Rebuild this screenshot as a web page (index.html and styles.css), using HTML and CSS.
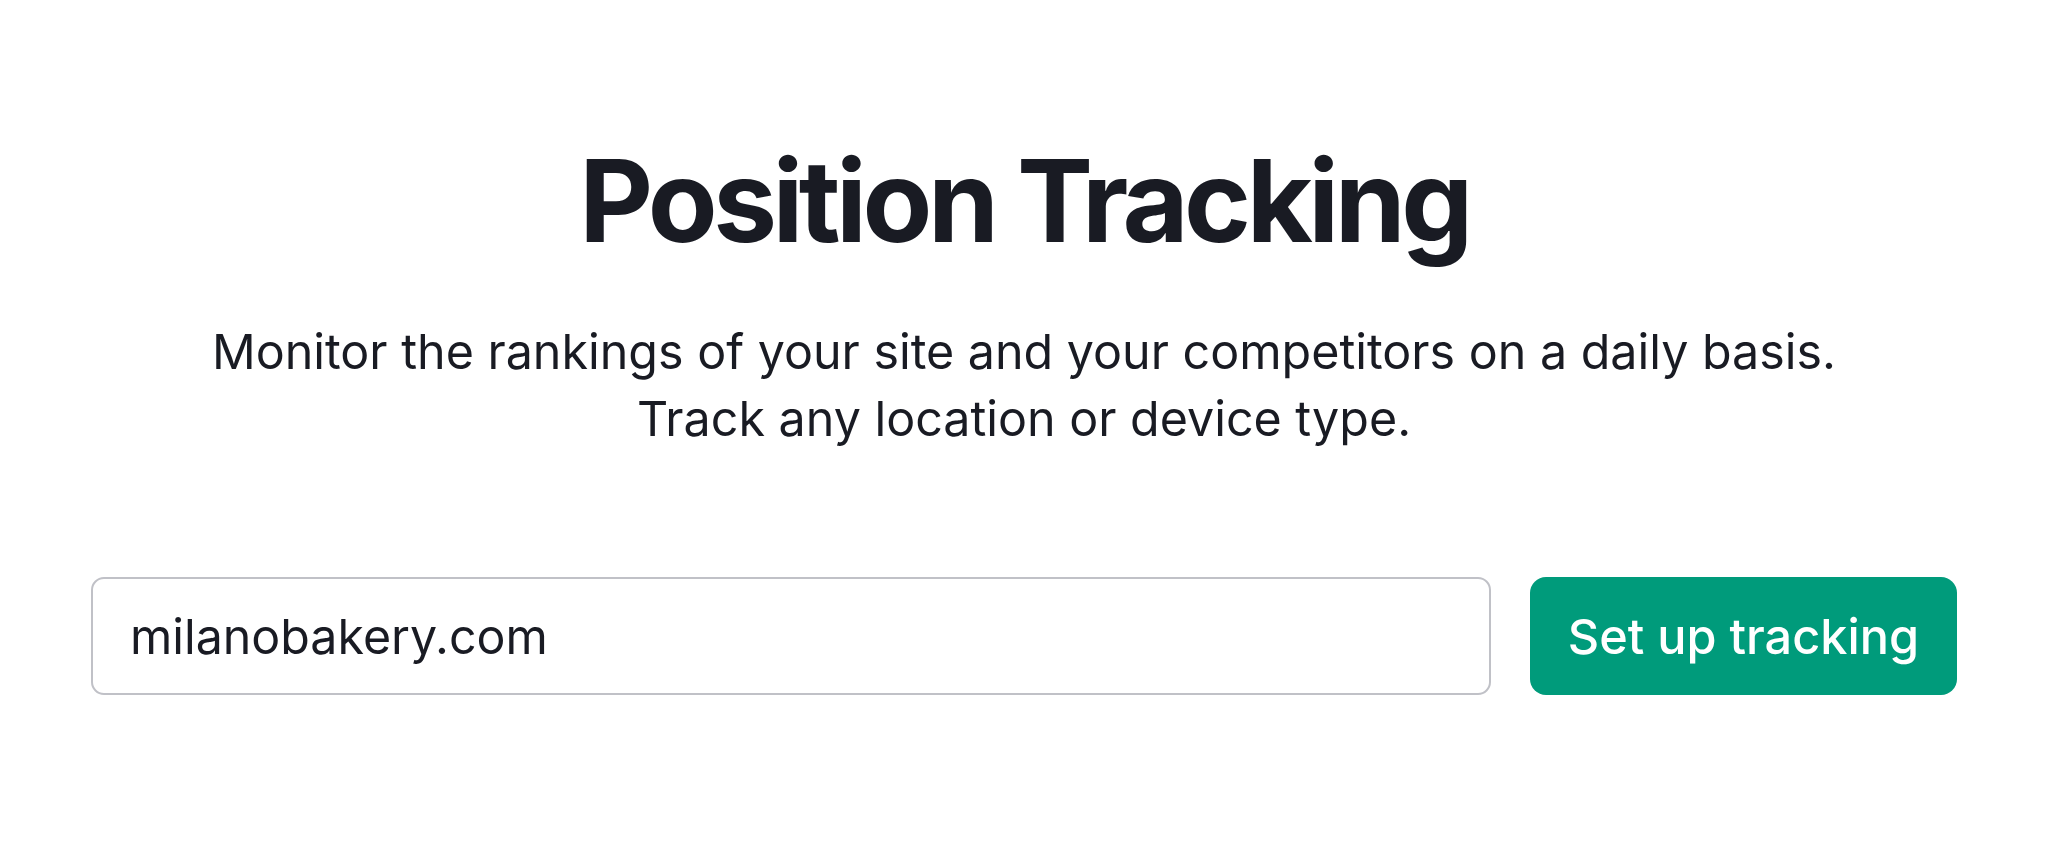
FILE: index.html
```html
<!DOCTYPE html>
<html lang="en">
<head>
    <meta charset="UTF-8">
    <meta name="viewport" content="width=device-width, initial-scale=1.0">
    <title>Position Tracking</title>
    <link rel="stylesheet" href="styles.css">
</head>
<body>

    <div class="container">
        <h1>Position Tracking</h1>
        <p class="lead">Monitor the rankings of your site and your competitors on a daily basis.<br>Track any location or device type.</p>

        <form class="tracking-form">
            <input type="text" class="domain-input" value="milanobakery.com">
            <button type="button" class="setup-btn">Set up tracking</button>
        </form>
    </div>

</body>
</html>
```

FILE: styles.css
```css
* {
    margin: 0;
    padding: 0;
    box-sizing: border-box;
}

body {
    font-family: Inter, "Noto Sans", sans-serif;
    background-color: #ffffff;
    color: #191b23;
}

.container {
    display: flex;
    flex-direction: column;
    align-items: center;
    padding-top: 131px;
}

h1 {
    font-size: 114px;
    font-weight: 700;
    line-height: 139px;
    letter-spacing: -4.5px;
}

.lead {
    margin-top: 48px;
    font-size: 48.4px;
    line-height: 67px;
    text-align: center;
}

.tracking-form {
    display: flex;
    gap: 39px;
    margin-top: 125px;
    width: 1866px;
}

.domain-input {
    flex: 1;
    height: 118px;
    padding: 0 37px;
    border: 2px solid #c0c1c7;
    border-radius: 13px;
    font-family: Inter, "Noto Sans", sans-serif;
    font-size: 48.3px;
    color: #191b23;
    outline: none;
}

.setup-btn {
    height: 118px;
    padding: 0 38px;
    background-color: #009b7b;
    color: white;
    border: none;
    border-radius: 16px;
    font-family: Inter, "Noto Sans", sans-serif;
    font-size: 48.6px;
    font-weight: 500;
    cursor: pointer;
}
```
